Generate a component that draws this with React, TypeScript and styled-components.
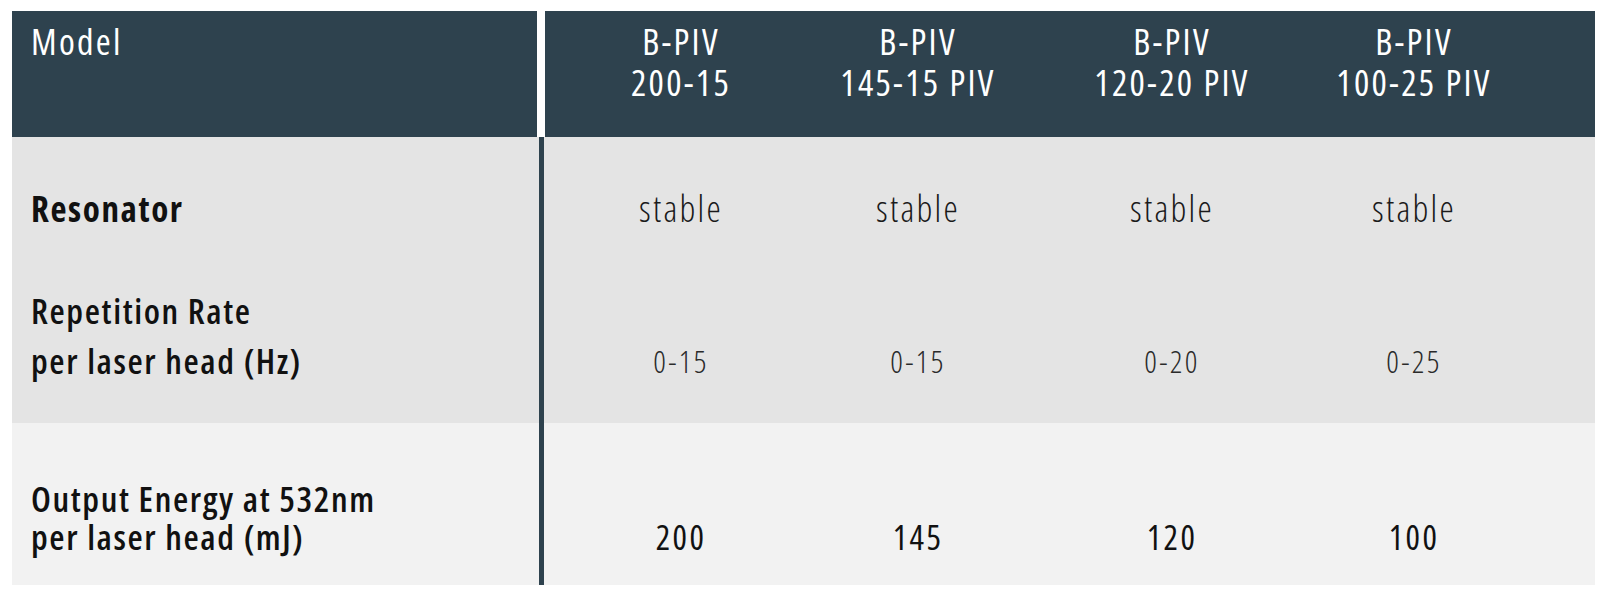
import React from "react";
import styled, { createGlobalStyle } from "styled-components";

const COLS = "525px 8px 270px 204px 304px 180px 92px";
const SLATE = "#2e424e";

const Global = createGlobalStyle`
  body {
    margin: 0;
    background: #ffffff;
    font-family: "Open Sans", "Noto Sans", sans-serif;
    font-stretch: 75%;
    color: #111111;
  }
`;

const Page = styled.div`
  padding: 11px 15px 0 12px;
`;

const Table = styled.div`
  display: flex;
  flex-direction: column;
  width: 1583px;
`;

const HeadRow = styled.div`
  display: grid;
  grid-template-columns: ${COLS};
  height: 126px;
  color: #ffffff;
  font-size: 36px;
  font-weight: 500;
  letter-spacing: 2.3px;
  line-height: 41px;
`;

const HeadCell = styled.div<{ $label?: boolean }>`
  background: ${SLATE};
  padding: 10px 0 0 ${(p) => (p.$label ? "19px" : "2px")};
  text-align: ${(p) => (p.$label ? "left" : "center")};
`;

const Divider = styled.div<{ $head?: boolean }>`
  display: flex;
  padding-left: 2px;
  background: ${(p) => (p.$head ? "#ffffff" : "transparent")};

  &::before {
    content: "";
    width: 5px;
    background: ${(p) => (p.$head ? "transparent" : SLATE)};
  }
`;

const Label = styled.div<{ $strong?: boolean }>`
  padding-left: 19px;
  font-size: 35px;
  font-weight: ${(p) => (p.$strong ? 660 : 560)};
  letter-spacing: 1.6px;
  align-self: end;
`;

const Value = styled.div<{ $size: number; $weight: number; $tone?: string }>`
  text-align: center;
  align-self: end;
  padding-left: 2px;
  font-size: ${(p) => p.$size}px;
  font-weight: ${(p) => p.$weight};
  letter-spacing: 2.3px;
  color: ${(p) => p.$tone || "#111111"};
`;

const BodyRow = styled.div<{ $bg: string; $top: number; $bottom: number; $lh: number }>`
  display: grid;
  grid-template-columns: ${COLS};
  background: ${(p) => p.$bg};
  line-height: ${(p) => p.$lh}px;

  & > ${Label}, & > ${Value} {
    padding-top: ${(p) => p.$top}px;
    padding-bottom: ${(p) => p.$bottom}px;
  }
`;

const MODELS = [
  ["B-PIV", "200-15"],
  ["B-PIV", "145-15 PIV"],
  ["B-PIV", "120-20 PIV"],
  ["B-PIV", "100-25 PIV"],
];

const ROWS = [
  {
    label: ["Resonator"],
    strong: true,
    values: ["stable", "stable", "stable", "stable"],
    size: 36,
    weight: 300,
    tone: "#1a1a1a",
    bg: "#e4e4e4",
    top: 47,
    bottom: 28,
    lh: 50,
  },
  {
    label: ["Repetition Rate", "per laser head (Hz)"],
    values: ["0-15", "0-15", "0-20", "0-25"],
    size: 31,
    weight: 300,
    tone: "#2a2a2a",
    bg: "#e4e4e4",
    top: 24,
    bottom: 37,
    lh: 50,
  },
  {
    label: ["Output Energy at 532nm", "per laser head (mJ)"],
    values: ["200", "145", "120", "100"],
    size: 34,
    weight: 400,
    tone: "#111111",
    bg: "#f2f2f2",
    top: 57,
    bottom: 29,
    lh: 38,
  },
];

export default function App() {
  return (
    <Page>
      <Global />
      <Table>
        <HeadRow>
          <HeadCell $label>Model</HeadCell>
          <Divider $head />
          {MODELS.map(([a, b]) => (
            <HeadCell key={b}>
              {a}
              <br />
              {b}
            </HeadCell>
          ))}
          <HeadCell />
        </HeadRow>
        {ROWS.map((row) => (
          <BodyRow key={row.label[0]} $bg={row.bg} $top={row.top} $bottom={row.bottom} $lh={row.lh}>
            <Label $strong={row.strong}>
              {row.label.map((l, i) => (
                <React.Fragment key={l}>
                  {i > 0 && <br />}
                  {l}
                </React.Fragment>
              ))}
            </Label>
            <Divider />
            {row.values.map((v, i) => (
              <Value key={i} $size={row.size} $weight={row.weight} $tone={row.tone}>
                {v}
              </Value>
            ))}
            <div />
          </BodyRow>
        ))}
      </Table>
    </Page>
  );
}
